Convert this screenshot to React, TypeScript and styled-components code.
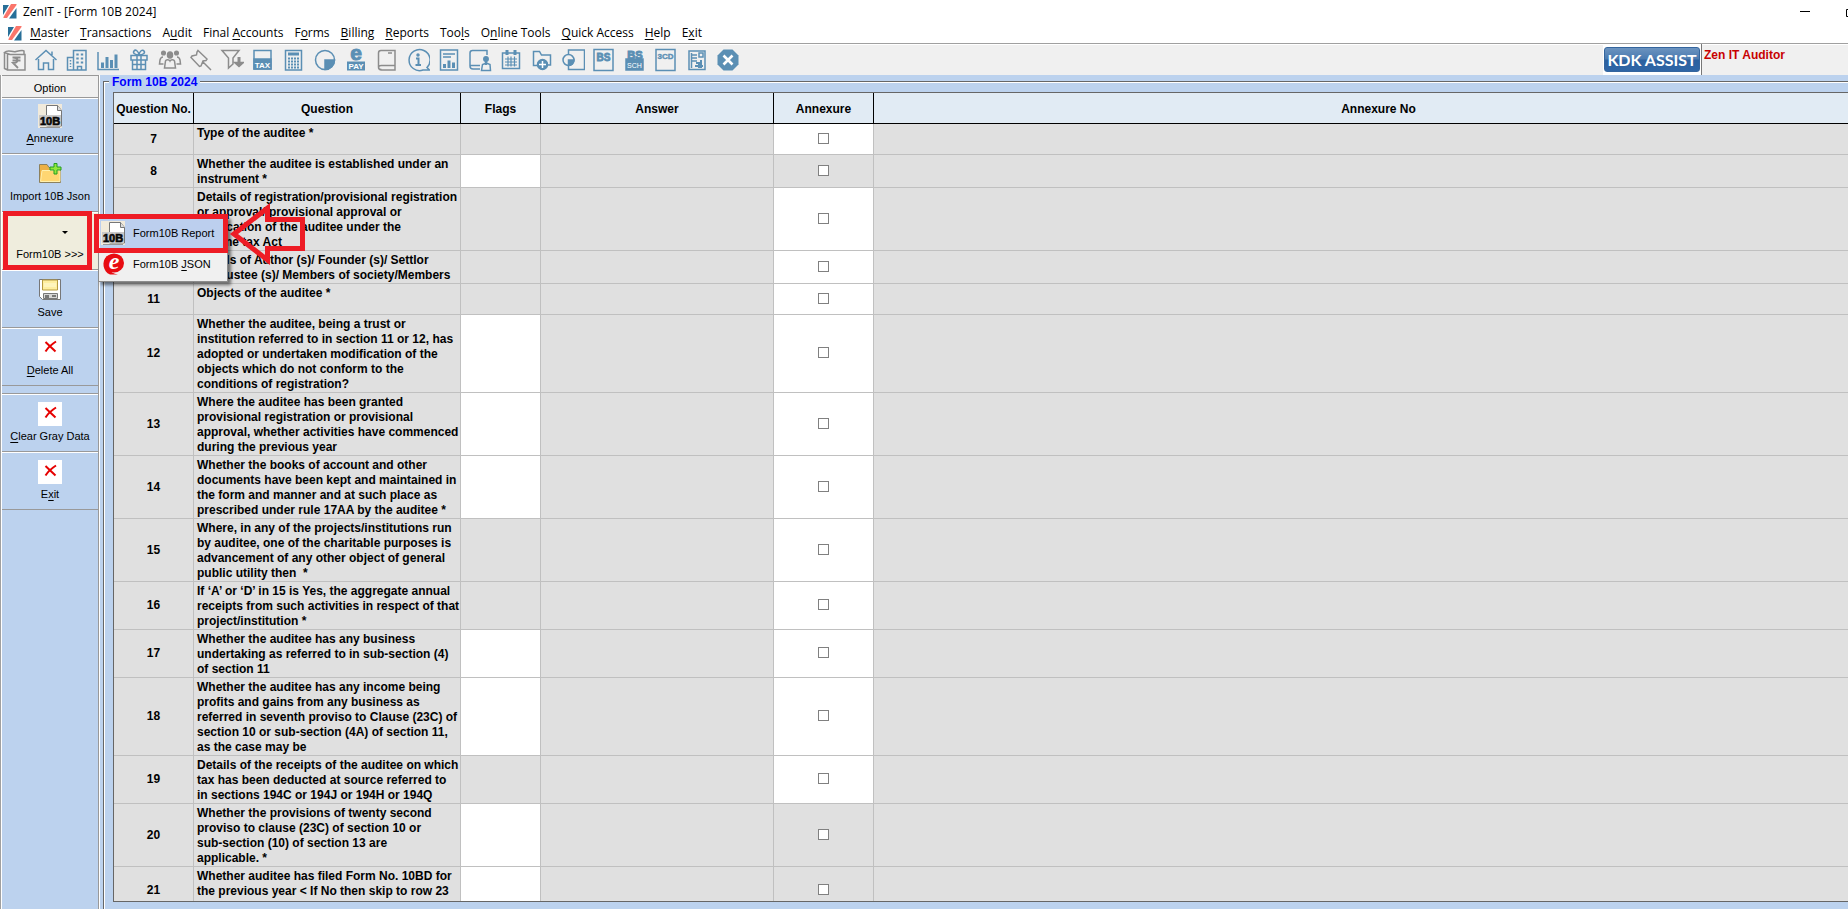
import React from "react";
import styled, { createGlobalStyle, css } from "styled-components";

const BLUE = "#bcd2ee";
const STEEL = "#5b8fb4";
const GREY = "#8c8c8c";
const RED = "#ee1c25";

const GlobalStyle = createGlobalStyle`
  * { box-sizing: border-box; }
  body { margin: 0; background: ${BLUE}; color: #000; font-family: "Liberation Sans", Arial, sans-serif; }
  button { font: inherit; color: inherit; border: 0; padding: 0; background: none; }
`;

const Screen = styled.div`
  height: 100vh;
  overflow: hidden;
`;

/* The application window runs past the right edge of the screen. */
const AppWindow = styled.div`
  position: relative;
  display: flex;
  flex-direction: column;
  width: calc(100% + 72px);
  height: 100%;
`;

const TitleBar = styled.header`
  display: flex;
  align-items: center;
  flex: none;
  height: 23px;
  padding-left: 3px;
  gap: 6px;
  background: #fff;
  font: 12px/16px "Open Sans", "Noto Sans", sans-serif;
`;

const WindowControls = styled.div`
  display: flex;
  height: 100%;
  margin-left: auto;
`;

const WindowButton = styled.button`
  display: flex;
  align-items: center;
  justify-content: center;
  width: 46px;
`;

const MenuBar = styled.nav`
  display: flex;
  align-items: center;
  flex: none;
  height: 20px;
  padding-left: 8px;
  gap: 8px;
  background: #fff;
  font: 12px/18px "Open Sans", "Noto Sans", sans-serif;
  white-space: nowrap;
`;

const MenuList = styled.div`
  display: flex;
  gap: 11px;
`;

const Mnemonic = styled.span`
  text-decoration: underline;
  text-underline-offset: 2px;
`;

const ToolBar = styled.div`
  display: flex;
  flex: none;
  height: 32px;
  border-top: 1px solid #a0a0a0;
  box-shadow: inset 0 1px #fff;
  background: #f0f0f0;
`;

const ToolButton = styled.button`
  && {
    display: flex;
    align-items: center;
    width: 31px;
    height: 32px;
    padding-left: 3px;
  }
`;

const Assist = styled.div`
  width: 98px;
  height: 100%;
  margin-left: auto;
  padding: 3px 1px 0;
  background: #fff;
`;

const AssistButton = styled.button`
  && {
    display: block;
    width: 96px;
    height: 25px;
    border: 1px solid #34659e;
    border-radius: 3px;
    background: linear-gradient(#6b93bf, #4a7ab0 48%, #2b609f 52%, #2f66a6);
    color: #fff;
    font: bold 16px/22px Lato, sans-serif;
    white-space: nowrap;
  }
`;

const Edition = styled.div`
  width: 219px;
  padding: 4px 2px;
  border-left: 1px solid #777;
  color: #c80000;
  font-size: 12px;
  line-height: 15px;
  font-weight: bold;
`;

const Body = styled.div`
  display: flex;
  flex: 1;
  min-height: 0;
`;

const SideBar = styled.aside`
  flex: none;
  width: 100px;
  border-right: 1px solid #fff;
  border-left: 1px solid #a0a0a0;
  box-shadow: inset 1px 0 #fff, inset -1px 0 #999;
  padding: 0 1px;
  background: ${BLUE};
  font-size: 11px;
  line-height: 14px;
`;

const SideHeader = styled.div`
  height: 23px;
  padding-top: 5px;
  border-top: 1px solid #999;
  border-bottom: 1px solid #999;
  background: #f0f0f0;
  text-align: center;
`;

const SideSlot = styled.div<{ $spaced?: boolean }>`
  position: relative;
  ${(p) => p.$spaced && css`
    padding-top: 8px;
  `}
`;

const SideButton = styled.button<{ $first?: boolean; $open?: boolean; $ruled?: boolean }>`
  && {
    display: flex;
    flex-direction: column;
    align-items: center;
    gap: 3px;
    width: 100%;
    height: ${(p) => (p.$first ? 56 : 58)}px;
    padding-top: ${(p) => (p.$first ? 5 : 7)}px;
    border-top: 1px solid #fff;
    border-bottom: 1px solid #999;
    background: ${(p) => (p.$open ? "#efeddd" : BLUE)};
    box-shadow: ${(p) => (p.$ruled ? "0 -1px #999" : "none")};
    white-space: nowrap;
  }
`;

const Caret = styled.span`
  display: block;
  width: 24px;
  height: 24px;
  padding: 11px 0 0 24px;

  &::before {
    content: "";
    display: block;
    width: 0;
    border: 3px solid transparent;
    border-top-color: #000;
    border-bottom: 0;
  }
`;

const Popup = styled.div`
  position: absolute;
  z-index: 2;
  left: 96px;
  top: 4px;
  width: 130px;
  padding: 0 1px 2px;
  border: 1px solid #8c8c8c;
  background: #f0f0f0;
  box-shadow: 3px 3px 3px rgba(0, 0, 0, 0.5);
`;

const PopupItem = styled.button<{ $active?: boolean }>`
  && {
    display: flex;
    align-items: center;
    gap: 8px;
    width: 100%;
    height: 31px;
    padding-left: 1px;
    background: ${(p) => (p.$active ? "#bccfee" : "transparent")};
    white-space: nowrap;
  }
`;

const FormPanel = styled.fieldset`
  display: flex;
  flex: 1;
  min-width: 0;
  min-height: 0;
  margin: 0 4px 0 3px;
  padding: 4px 30px 7px 9px;
  border: 1px solid #666;
  border-bottom: 0;
  box-shadow: inset 1px 1px #fff;
`;

const FormTitle = styled.legend`
  padding: 1px 3px 0;
  margin-left: -4px;
  background: ${BLUE};
  color: #0000ff;
  font-size: 12px;
  line-height: 12px;
  font-weight: bold;
`;

const GridView = styled.div`
  flex: 1;
  min-width: 0;
  overflow: hidden;
  border: 1px solid #666;
  background: #e0e0e0;
`;

const Grid = styled.table`
  width: 100%;
  table-layout: fixed;
  border-collapse: separate;
  border-spacing: 0;
  font-size: 12px;
  line-height: 15px;
  font-weight: bold;
`;

const HeadCell = styled.th<{ $width?: number }>`
  width: ${(p) => (p.$width ? `${p.$width}px` : "auto")};
  height: 31px;
  padding: 2px 0 0;
  border-right: 1px solid #000;
  border-bottom: 1px solid #000;
  background: #e1ebf4;
  white-space: nowrap;
`;

const Cell = styled.td<{ $open?: boolean; $text?: boolean }>`
  height: 31px;
  padding: ${(p) => (p.$text ? "2px 3px 0" : "1px 3px")};
  border-right: 1px solid #c0c0c0;
  border-bottom: 1px solid #c0c0c0;
  background: ${(p) => (p.$open ? "#fff" : "#e0e0e0")};
  text-align: ${(p) => (p.$text ? "left" : "center")};
  vertical-align: ${(p) => (p.$text ? "top" : "middle")};
  white-space: pre;
`;

const Tick = styled.input`
  display: block;
  appearance: none;
  width: 11px;
  height: 11px;
  margin: 0 auto 2px;
  border: 1px solid #808080;
  background: #fff;
`;

const Callouts = styled.svg`
  position: absolute;
  z-index: 3;
  left: 0;
  top: 0;
  pointer-events: none;
`;

/* Draws a caption, underlining the letter that follows an ampersand. */
function Caption({ text }: { text: string }) {
  const at = text.indexOf("&");
  if (at < 0) return <span>{text}</span>;
  return (
    <span>
      {text.slice(0, at)}
      <Mnemonic>{text[at + 1]}</Mnemonic>
      {text.slice(at + 2)}
    </span>
  );
}

function Logo() {
  return (
    <svg width="14" height="15" viewBox="0 0 14 15" aria-hidden="true">
      <path d="M0 1h6L0 11z" fill="#286f98" />
      <path d="M13.500 0v1L4 14H.5v-1L8 0z" fill="#fa756b" />
      <path d="M13.500 4v10.500H6z" fill="#286f98" />
    </svg>
  );
}

function ToolIcon({ color = STEEL, children }: { color?: string; children: React.ReactNode }) {
  return (
    <svg width="24" height="24" viewBox="0 0 24 24" fill="none" stroke={color} strokeWidth="1.5" aria-hidden="true"
      fontFamily="Liberation Sans, Arial, sans-serif" fontWeight="bold" textAnchor="middle">
      {children}
    </svg>
  );
}

const tools: { name: string; color?: string; art: React.ReactNode }[] = [
  { name: "Rupee ledger", color: GREY, art: <>
    <path d="M1.500 4.500v16l3 1.500h17.500V6.500H7L1.500 4.500C5 1 9 4.500 13 3.500S20 2 21 3v3M4.500 6v15.500" />
    <path d="M9.500 9.500h8M9.500 12.500h8M10 9.500c6 0 6 5.500 0 5.500l5 5" strokeWidth="1.800" /></> },
  { name: "Home", art: <path d="M1.500 12 12 2.500 22.500 12M4.500 11v10.500h5V15h5v6.500h5V11M18 7V3.500" /> },
  { name: "Company", art: <>
    <path d="M8.500 22V2.500h12.500V22zM8.500 9.500H2.500V22h6M12.500 22v-3.500h4V22" />
    <path d="M12.500 5.500v10M17 5.500v10" strokeWidth="2.400" strokeDasharray="2 2" /><path d="M5.500 12v7" strokeDasharray="1.500 1.500" /></> },
  { name: "Chart", art: <><path d="M2 4v17.500h21" /><path d="M6.500 20v-5.500M11 20V9M15.500 20v-8M20 20V6.500" strokeWidth="3" /></> },
  { name: "Gift", art: <>
    <path d="M4 7.500h16v4.500H4zM5.500 12v9.500h13V12M10 7.500v14M14 7.500v14M5 16.500h14" />
    <path d="M12 7C8 7 5.500 5 7 3s4.500 0 5 4c.5-4 3.500-6 5-4s-1 4-5 4z" /></> },
  { name: "Clients", color: GREY, art: <>
    <ellipse cx="12" cy="7" rx="2.500" ry="3" fill={GREY} /><circle cx="5.500" cy="5" r="1.800" fill={GREY} /><circle cx="18.500" cy="5" r="1.800" fill={GREY} />
    <path d="M12 13c-1-2-4-1.500-4.500 0L6.500 20h11l-1-7c-.5-1.500-3.500-2-4.500 0z" /><path d="M5 9c-2 0-2.500 1-3 3l-.5 4h4M19 9c2 0 2.500 1 3 3l.5 4h-4" /></> },
  { name: "Pin", color: GREY, art: <path d="m9 2.500 9 8.500-1 1.500-3 .5-2 5-1.500.5L2 9.500 3 8l4.500-1L8 4zM14 14l8 8" /> },
  { name: "Filter", color: GREY, art: <><path d="M2 2.500h17L13 10v6l-4.500 4v-10z" /><path d="M19 9v8" strokeWidth="3" /><path d="m14.500 14.500 4.500 4 4.500-4z" fill={GREY} /></> },
  { name: "Tax", art: <><rect x="3" y="2.500" width="17" height="18.500" /><path d="M3 11h17v10H3z" fill={STEEL} /><text x="11.500" y="20" fontSize="8" fill="#fff" stroke="none">TAX</text></> },
  { name: "Calculator", art: <><rect x="3.500" y="2.500" width="16" height="19.500" /><path d="M6 6h11" strokeWidth="3" /><path d="M6 10.500h11M6 13.500h11M6 16.500h11M6 19.500h11" strokeWidth="2" strokeDasharray="2 1" /></> },
  { name: "Pie", art: <><circle cx="12" cy="12" r="9.500" /><path d="M12 12h9.500A9.500 9.500 0 0 1 12 21.500z" fill={STEEL} /></> },
  { name: "e-Pay", art: <><text x="12" y="12" fontSize="21" fill={STEEL} stroke={STEEL} strokeWidth="1">e</text><rect x="3" y="13.500" width="18" height="9" fill={STEEL} stroke="none" /><text x="12" y="21" fontSize="8" fill="#fff" stroke="none">PAY</text></> },
  { name: "Book", color: GREY, art: <path d="M20 2.500H6c-2 0-2.500 1-2.500 2.500v14c0 2 1 3 3 3H20zM20 17.500H6.500c-4 0-4 4 0 4M13 5h4" /> },
  { name: "Information", art: <><path d="M21 19.500A10.500 10.500 0 1 0 17 22h6.500z" /><path d="M10 10.500h2.500v6.500M9.500 17h5.500" strokeWidth="2" /><circle cx="12" cy="7" r="1" fill={STEEL} /></> },
  { name: "Report", art: <><rect x="3.500" y="2" width="17" height="20" /><path d="M6 6h12M6 9h8" /><path d="M7.500 20v-4M12 20v-7.500M16.500 20v-5.500" strokeWidth="3" /></> },
  { name: "Client book", art: <><path d="M19 7V2.500H4.500C3 2.500 2 3.500 2 5v13c0 2 1 3 3 3h7M2 17.500h10M13.500 22.500l1-6 4-1.500 3.500 1.500.5 6z" /><circle cx="18" cy="11" r="2.200" fill={STEEL} /><path d="M18 13v4" strokeWidth="2.400" /></> },
  { name: "Calendar", art: <><rect x="3.500" y="5" width="17" height="15.500" /><path d="M6 11h12M6 14h12M6 17h12M9 8.500v10M12 8.500v10M15.500 8.500v10" strokeWidth="1.200" /><path d="M8 2v5M16 2v5" strokeWidth="3" /></> },
  { name: "Add folder", art: <><path d="M9 17.500H3.500v-14h6l2 3.500h9v10H18" /><circle cx="12.500" cy="16.500" r="5" fill={STEEL} /><path d="M12.500 13v7M9 16.500h7" stroke="#fff" /></> },
  { name: "Pie report", art: <><path d="M7.500 6V2h16v19.500h-16V18" /><circle cx="7.500" cy="12" r="5.500" /><path d="M7.500 12H13a5.500 5.500 0 0 1-5.500 5.500z" fill={STEEL} /></> },
  { name: "Balance sheet", art: <><rect x="2" y="1.500" width="19" height="21" /><text x="11.500" y="13" fontSize="10" fill={STEEL} stroke={STEEL} strokeWidth=".8">BS</text></> },
  { name: "Balance sheet schedules", art: <><text x="12" y="10.500" fontSize="11" fill={STEEL} stroke={STEEL} strokeWidth="1">BS</text><path d="M3 11h17v11H3z" fill={STEEL} /><text x="11.500" y="20" fontSize="7" fontWeight="normal" fill="#fff" stroke="none">SCH</text></> },
  { name: "Form 3CD", art: <><rect x="2" y="1.500" width="19" height="21" /><text x="11.500" y="11" fontSize="8" fill={STEEL} stroke={STEEL} strokeWidth=".4">3CD</text></> },
  { name: "Statement", art: <><path d="M4 3h16v18.500H4z" /><path d="M6.500 5v15M6 7h6M6 10h6M6 13h6M14 5h4v4h-4z" strokeWidth="1.500" /><path d="M11 15h3v5M16 12v8M10 18h8" strokeWidth="2" /></> },
  { name: "Close form", art: <><path d="m7.500 1.500h9l6 6v9l-6 6h-9l-6-6v-9z" fill={STEEL} stroke="none" /><path d="m7.500 7.500 9 9M16.500 7.500l-9 9" stroke="#fff" strokeWidth="2.600" /></> },
];

function DocIcon() {
  return (
    <svg width="24" height="24" viewBox="0 0 24 24" aria-hidden="true">
      <path d="M0 0h24v24H0z" fill="#f1eadb" />
      <path d="M8.500 22V1.500h11l4 5V22z" fill="#fff" stroke="#777" />
      <path d="M19.500 1.500v5h4" fill="#ddd" stroke="#777" />
      <path d="M1 11h22v11H1z" fill="#c9c9c9" />
      <text x="12" y="20.500" fontFamily="Liberation Sans, Arial, sans-serif" fontWeight="bold" fontSize="11" textAnchor="middle" stroke="#111" strokeWidth=".7">10B</text>
      <path d="M2 23.500h20" stroke="#999" />
    </svg>
  );
}

function FolderIcon() {
  return (
    <svg width="24" height="24" viewBox="0 0 24 24" aria-hidden="true">
      <path d="M1.500 20.500V2.500H9l2 3h11.500v15z" fill="#edb044" stroke="#8c815e" />
      <path d="M2.500 19.500 4 8.500h18v11z" fill="#ffd672" stroke="#fff0ad" />
      <path d="M16 1.500h3V5h4v3h-4v4h-3V8h-4V5h4z" fill="#91e83c" stroke="#249d23" />
    </svg>
  );
}

function DiskIcon() {
  return (
    <svg width="24" height="24" viewBox="0 0 24 24" aria-hidden="true">
      <path d="M1.500 1.500h21v20h-18l-3-3z" fill="#fff" stroke="#777" />
      <path d="M4.500 2h15v10h-15z" fill="#ffefa0" stroke="#b79b40" />
      <path d="M6 5h12v4H6z" fill="#fff5bd" />
      <path d="M5.500 15.500h14v5h-14z" fill="#d6d6d6" stroke="#777" />
      <path d="M7 17h4v3H7zM14 17h4v2h-4z" fill="#777" />
    </svg>
  );
}

function CrossIcon() {
  return (
    <svg width="24" height="24" viewBox="0 0 24 24" aria-hidden="true">
      <path d="M0 0h24v24H0z" fill="#fff" />
      <path d="m7.500 6 10 9.500" stroke="#e60000" strokeWidth="2" />
      <path d="M18 5.500Q11 10 7.500 15.500" fill="none" stroke="#e60000" strokeWidth="2" />
    </svg>
  );
}

function JsonIcon() {
  return (
    <svg width="24" height="24" viewBox="0 0 24 24" aria-hidden="true">
      <ellipse cx="13" cy="11" rx="10" ry="9.500" fill="#e80c12" />
      <path d="M6 4C0 9 2 20 9 22.500h8C8 21 4 14 6 4z" fill="#e80c12" />
      <text x="13" y="17" textAnchor="middle" fontFamily="Liberation Serif, serif" fontStyle="italic" fontWeight="bold" fontSize="24" fill="#fff">e</text>
    </svg>
  );
}

const menus = ["&Master", "&Transactions", "A&udit", "Final &Accounts", "F&orms", "&Billing", "&Reports",
  "Too&ls", "O&nline Tools", "&Quick Access", "&Help", "E&xit"];

type Row = { no: number; lines: string[]; flag?: boolean; annex: boolean };

const rows: Row[] = [
  { no: 7, lines: ["Type of the auditee *"], annex: true },
  { no: 8, lines: ["Whether the auditee is established under an", "instrument *"], flag: true, annex: false },
  { no: 9, lines: ["Details of registration/provisional registration", "or approval/ provisional approval or", "notification of the auditee under the", "Income tax Act"], annex: true },
  { no: 10, lines: ["Details of Author (s)/ Founder (s)/ Settlor", "(s)/Trustee (s)/ Members of society/Members"], annex: true },
  { no: 11, lines: ["Objects of the auditee *"], annex: true },
  { no: 12, lines: ["Whether the auditee, being a trust or", "institution referred to in section 11 or 12, has", "adopted or undertaken modification of the", "objects which do not conform to the", "conditions of registration?"], flag: true, annex: true },
  { no: 13, lines: ["Where the auditee has been granted", "provisional registration or provisional", "approval, whether activities have commenced", "during the previous year"], flag: true, annex: true },
  { no: 14, lines: ["Whether the books of account and other", "documents have been kept and maintained in", "the form and manner and at such place as", "prescribed under rule 17AA by the auditee *"], flag: true, annex: true },
  { no: 15, lines: ["Where, in any of the projects/institutions run", "by auditee, one of the charitable purposes is", "advancement of any other object of general", "public utility then  *"], annex: true },
  { no: 16, lines: ["If ‘A’ or ‘D’ in 15 is Yes, the aggregate annual", "receipts from such activities in respect of that", "project/institution *"], annex: true },
  { no: 17, lines: ["Whether the auditee has any business", "undertaking as referred to in sub-section (4)", "of section 11"], flag: true, annex: true },
  { no: 18, lines: ["Whether the auditee has any income being", "profits and gains from any business as", "referred in seventh proviso to Clause (23C) of", "section 10 or sub-section (4A) of section 11,", "as the case may be"], flag: true, annex: true },
  { no: 19, lines: ["Details of the receipts of the auditee on which", "tax has been deducted at source referred to", "in sections 194C or 194J or 194H or 194Q"], annex: true },
  { no: 20, lines: ["Whether the provisions of twenty second", "proviso to clause (23C) of section 10 or", "sub-section (10) of section 13 are", "applicable. *"], flag: true, annex: false },
  { no: 21, lines: ["Whether auditee has filed Form No. 10BD for", "the previous year < If No then skip to row 23", " "], flag: true, annex: false },
];

export default function App() {
  return (
    <Screen>
      <GlobalStyle />
      <AppWindow>
        <TitleBar>
          <Logo />
          <span>ZenIT - [Form 10B 2024]</span>
          <WindowControls>
            <WindowButton aria-label="Minimize">
              <svg width="10" height="10"><path d="M0 4.500h10" stroke="#000" /></svg>
            </WindowButton>
            <WindowButton aria-label="Restore">
              <svg width="10" height="10" fill="none" stroke="#000"><path d="M.5 2.500h7v7h-7zM2.500 2V.5h7v7H8" /></svg>
            </WindowButton>
            <WindowButton aria-label="Close">
              <svg width="10" height="10" stroke="#000"><path d="m0 0 10 10M10 0 0 10" /></svg>
            </WindowButton>
          </WindowControls>
        </TitleBar>

        <MenuBar>
          <Logo />
          <MenuList>
            {menus.map((m) => <button key={m}><Caption text={m} /></button>)}
          </MenuList>
        </MenuBar>

        <ToolBar>
          {tools.map((t) => (
            <ToolButton key={t.name} aria-label={t.name}><ToolIcon color={t.color}>{t.art}</ToolIcon></ToolButton>
          ))}
          <Assist><AssistButton>KDK ASSIST</AssistButton></Assist>
          <Edition>Zen IT Auditor</Edition>
        </ToolBar>

        <Body>
          <SideBar>
            <SideHeader>Option</SideHeader>
            <SideSlot><SideButton $first><DocIcon /><Caption text="&Annexure" /></SideButton></SideSlot>
            <SideSlot><SideButton><FolderIcon /><Caption text="Import 10B Json" /></SideButton></SideSlot>
            <SideSlot>
              <SideButton $open aria-haspopup="menu" aria-expanded="true"><Caret /><Caption text="Form10B >>>" /></SideButton>
              <Popup role="menu">
                <PopupItem role="menuitem" $active><DocIcon /><Caption text="Form10B Report" /></PopupItem>
                <PopupItem role="menuitem"><JsonIcon /><Caption text="Form10B &JSON" /></PopupItem>
              </Popup>
            </SideSlot>
            <SideSlot><SideButton><DiskIcon /><Caption text="Save" /></SideButton></SideSlot>
            <SideSlot><SideButton><CrossIcon /><Caption text="&Delete All" /></SideButton></SideSlot>
            <SideSlot $spaced><SideButton $ruled><CrossIcon /><Caption text="&Clear Gray Data" /></SideButton></SideSlot>
            <SideSlot><SideButton><CrossIcon /><Caption text="E&xit" /></SideButton></SideSlot>
          </SideBar>

          <FormPanel>
            <FormTitle>Form 10B 2024</FormTitle>
            <GridView>
              <Grid>
                <thead>
                  <tr>
                    <HeadCell $width={80}>Question No.</HeadCell>
                    <HeadCell $width={267}>Question</HeadCell>
                    <HeadCell $width={80}>Flags</HeadCell>
                    <HeadCell $width={233}>Answer</HeadCell>
                    <HeadCell $width={100}>Annexure</HeadCell>
                    <HeadCell>Annexure No</HeadCell>
                  </tr>
                </thead>
                <tbody>
                  {rows.map((r) => (
                    <tr key={r.no}>
                      <Cell>{r.no}</Cell>
                      <Cell $text>{r.lines.join("\n")}</Cell>
                      <Cell $open={r.flag} />
                      <Cell />
                      <Cell $open={r.annex}><Tick type="checkbox" aria-label={`Annexure for question ${r.no}`} /></Cell>
                      <Cell />
                    </tr>
                  ))}
                </tbody>
              </Grid>
            </GridView>
          </FormPanel>
        </Body>

        <Callouts width="320" height="300" fill="none" stroke={RED} strokeWidth="5" aria-hidden="true">
          <rect x="5.500" y="213.500" width="84" height="54" />
          <rect x="96.500" y="216.500" width="129" height="34" />
          <path d="M234 234 267.500 208v11.500h35v29h-35V260z" />
        </Callouts>
      </AppWindow>
    </Screen>
  );
}
